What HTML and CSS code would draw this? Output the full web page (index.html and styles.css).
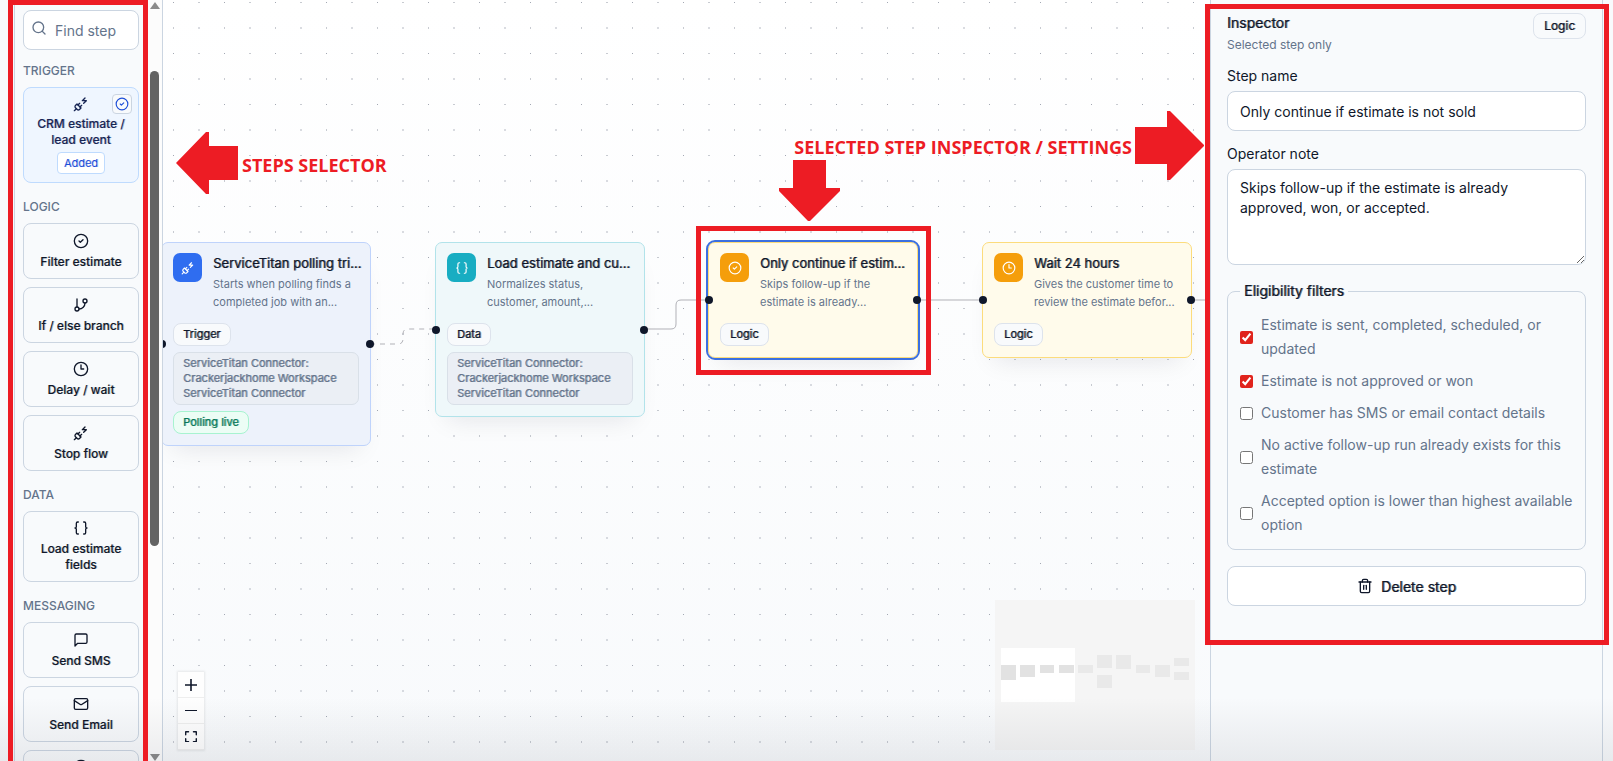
FILE: index.html
```html
<!DOCTYPE html>
<html lang="en">

<head>
  <meta charset="UTF-8">
  <meta name="viewport" content="width=device-width, initial-scale=1.0">
  <title>Workflow Builder</title>
  <link rel="stylesheet" href="styles.css">
</head>

<body>
  <!-- shared icons -->
  <svg class="sprite" aria-hidden="true">
    <symbol id="i-search" viewBox="0 0 24 24"><circle cx="11" cy="11" r="8"/><path d="m21 21-4.3-4.3"/></symbol>
    <symbol id="i-plug" viewBox="0 0 24 24"><path d="M6.3 20.3a2.4 2.4 0 0 0 3.4 0L12 18l-6-6-2.3 2.3a2.4 2.4 0 0 0 0 3.4Z"/><path d="m2 22 3-3"/><path d="M7.5 13.5 10 11"/><path d="M10.5 16.5 13 14"/><path d="m18 3-4 4h6l-4 4"/></symbol>
    <symbol id="i-check" viewBox="0 0 24 24"><circle cx="12" cy="12" r="10"/><path d="m9 12 2 2 4-4"/></symbol>
    <symbol id="i-branch" viewBox="0 0 24 24"><path d="M6 3v12"/><circle cx="18" cy="6" r="3"/><circle cx="6" cy="18" r="3"/><path d="M18 9a9 9 0 0 1-9 9"/></symbol>
    <symbol id="i-clock" viewBox="0 0 24 24"><circle cx="12" cy="12" r="10"/><path d="M12 6v6h4"/></symbol>
    <symbol id="i-braces" viewBox="0 0 24 24"><path d="M8 3H7a2 2 0 0 0-2 2v5a2 2 0 0 1-2 2 2 2 0 0 1 2 2v5a2 2 0 0 0 2 2h1"/><path d="M16 21h1a2 2 0 0 0 2-2v-5a2 2 0 0 1 2-2 2 2 0 0 1-2-2V5a2 2 0 0 0-2-2h-1"/></symbol>
    <symbol id="i-message" viewBox="0 0 24 24"><path d="M21 15a2 2 0 0 1-2 2H7l-4 4V5a2 2 0 0 1 2-2h14a2 2 0 0 1 2 2z"/></symbol>
    <symbol id="i-mail" viewBox="0 0 24 24"><rect x="2" y="4" width="20" height="16" rx="2"/><path d="m22 7-9 5.7a2 2 0 0 1-2 0L2 7"/></symbol>
    <symbol id="i-trash" viewBox="0 0 24 24"><path d="M3 6h18"/><path d="M19 6v14a2 2 0 0 1-2 2H7a2 2 0 0 1-2-2V6"/><path d="M8 6V4a2 2 0 0 1 2-2h4a2 2 0 0 1 2 2v2"/><path d="M10 11v6"/><path d="M14 11v6"/></symbol>
  </svg>

  <div class="app">
    <aside class="sidebar">
      <div class="palette">
        <div class="search">
          <svg class="icon"><use href="#i-search"/></svg>
          <input type="text" placeholder="Find step" aria-label="Find step">
        </div>

        <section class="group">
          <h3>Trigger</h3>
          <button class="step added">
            <svg class="icon"><use href="#i-plug"/></svg>
            <span>CRM estimate / lead event</span>
            <span class="added-badge">Added</span>
            <span class="tick"><svg class="icon"><use href="#i-check"/></svg></span>
          </button>
        </section>

        <section class="group">
          <h3>Logic</h3>
          <button class="step"><svg class="icon"><use href="#i-check"/></svg><span>Filter estimate</span></button>
          <button class="step"><svg class="icon"><use href="#i-branch"/></svg><span>If / else branch</span></button>
          <button class="step"><svg class="icon"><use href="#i-clock"/></svg><span>Delay / wait</span></button>
          <button class="step"><svg class="icon"><use href="#i-plug"/></svg><span>Stop flow</span></button>
        </section>

        <section class="group">
          <h3>Data</h3>
          <button class="step"><svg class="icon"><use href="#i-braces"/></svg><span>Load estimate fields</span></button>
        </section>

        <section class="group">
          <h3>Messaging</h3>
          <button class="step"><svg class="icon"><use href="#i-message"/></svg><span>Send SMS</span></button>
          <button class="step"><svg class="icon"><use href="#i-mail"/></svg><span>Send Email</span></button>
          <button class="step last" aria-label="More"><svg class="icon"><use href="#i-clock"/></svg></button>
        </section>
      </div>
      <div class="scrollbar">
        <span class="arrow-up"></span>
        <span class="thumb"></span>
        <span class="arrow-down"></span>
      </div>
    </aside>

    <main class="canvas">
      <svg class="edges" aria-hidden="true">
        <defs>
          <pattern id="dots" width="51" height="51" patternUnits="userSpaceOnUse">
            <rect x="10" y="2" width="1" height="1"/>
            <rect x="10" y="27" width="1" height="2" opacity=".6"/>
            <rect x="35" y="2" width="2" height="1" opacity=".6"/>
            <rect x="35" y="27" width="2" height="2" opacity=".4"/>
          </pattern>
        </defs>
        <rect class="dots" width="100%" height="100%" fill="url(#dots)"/>
        <path class="dashed" d="M207 344H235Q240 344 240 339V334Q240 329 245 329H272"/>
        <path d="M481 329H508Q513 329 513 324V305Q513 300 518 300H546"/>
        <path d="M754 300H819"/>
        <path d="M1027 300H1060"/>
      </svg>

      <article class="node trigger">
        <div class="node-head">
          <span class="node-icon"><svg class="icon"><use href="#i-plug"/></svg></span>
          <div class="node-text">
            <h4>ServiceTitan polling tri...</h4>
            <p>Starts when polling finds a completed job with an...</p>
          </div>
        </div>
        <span class="tag">Trigger</span>
        <p class="connector">ServiceTitan Connector: Crackerjackhome Workspace ServiceTitan Connector</p>
        <span class="tag live">Polling live</span>
        <i class="handle in"></i><i class="handle out"></i>
      </article>

      <article class="node data">
        <div class="node-head">
          <span class="node-icon"><svg class="icon"><use href="#i-braces"/></svg></span>
          <div class="node-text">
            <h4>Load estimate and cu...</h4>
            <p>Normalizes status, customer, amount,...</p>
          </div>
        </div>
        <span class="tag">Data</span>
        <p class="connector">ServiceTitan Connector: Crackerjackhome Workspace ServiceTitan Connector</p>
        <i class="handle in"></i><i class="handle out"></i>
      </article>

      <article class="node logic filter selected">
        <div class="node-head">
          <span class="node-icon"><svg class="icon"><use href="#i-check"/></svg></span>
          <div class="node-text">
            <h4>Only continue if estim...</h4>
            <p>Skips follow-up if the estimate is already...</p>
          </div>
        </div>
        <span class="tag">Logic</span>
        <i class="handle in"></i><i class="handle out"></i>
      </article>

      <article class="node logic wait">
        <div class="node-head">
          <span class="node-icon"><svg class="icon"><use href="#i-clock"/></svg></span>
          <div class="node-text">
            <h4>Wait 24 hours</h4>
            <p>Gives the customer time to review the estimate befor...</p>
          </div>
        </div>
        <span class="tag">Logic</span>
        <i class="handle in"></i><i class="handle out"></i>
      </article>

      <div class="controls">
        <button aria-label="Zoom in"><svg viewBox="0 0 32 32"><path d="M18.133 13.867V0h-4.266v13.867H0v4.266h13.867V32h4.266V18.133H32v-4.266z"/></svg></button>
        <button aria-label="Zoom out"><svg viewBox="0 0 32 5"><path d="M0 0h32v4.2H0z"/></svg></button>
        <button aria-label="Fit view"><svg viewBox="0 0 32 30"><path d="M3.7 4.6v5.4c0 1-.8 1.9-1.8 1.9S0 11 0 10V2.7C0 1.200 1.200 0 2.700 0h6.700c1 0 1.900.8 1.900 1.900s-.8 1.900-1.900 1.900H4.500c-.4 0-.8.4-.8.8zM29.300 0h-6.700c-1 0-1.900.8-1.900 1.900s.8 1.900 1.900 1.900h4.900c.4 0 .8.4.8.8v5.400c0 1 .8 1.900 1.900 1.900S32 11 32 10V2.700C32 1.200 30.800 0 29.300 0zM28.300 25.800c0 .4-.4.8-.8.8h-4.900c-1 0-1.900.8-1.900 1.900s.8 1.900 1.900 1.900h6.700c1.500 0 2.700-1.200 2.700-2.700v-7.300c0-1-.8-1.900-1.900-1.900s-1.900.8-1.900 1.900zM4.500 26.600c-.4 0-.8-.4-.8-.8v-5.400c0-1-.8-1.900-1.900-1.900S0 19.400 0 20.400v7.300c0 1.500 1.200 2.700 2.700 2.700h6.700c1 0 1.900-.8 1.900-1.900s-.8-1.900-1.900-1.900z"/></svg></button>
      </div>

      <svg class="minimap" viewBox="0 0 200 150" aria-hidden="true">
        <rect class="map-view" x="6" y="48" width="74" height="54"/>
        <g class="map-near">
          <rect x="6" y="65" width="15" height="15"/>
          <rect x="25" y="65" width="15" height="12"/>
          <rect x="45" y="65" width="14" height="8"/>
          <rect x="64" y="65" width="15" height="8"/>
        </g>
        <g class="map-far">
          <rect x="83" y="65" width="15" height="8"/>
          <rect x="102" y="55" width="15" height="13"/>
          <rect x="102" y="75" width="15" height="13"/>
          <rect x="121" y="55" width="15" height="14"/>
          <rect x="141" y="65" width="14" height="8"/>
          <rect x="160" y="65" width="15" height="12"/>
          <rect x="179" y="58" width="15" height="8"/>
          <rect x="179" y="72" width="15" height="8"/>
        </g>
      </svg>

      <div class="frame node-frame"></div>
      <p class="note steps-note">STEPS SELECTOR</p>
      <p class="note inspector-note">SELECTED STEP INSPECTOR / SETTINGS</p>
      <svg class="arrow arrow-left" viewBox="0 0 62 62"><path d="M0 31 30 0h3v14h29v34H33v14h-3z"/></svg>
      <svg class="arrow arrow-down-note" viewBox="0 0 61 61"><path d="M14 0h33v28h14v3L31 61h-2L0 31v-3h14z"/></svg>
      <svg class="arrow arrow-right" viewBox="0 0 69 69"><path d="M0 16h32V0h3l34 34v1L35 69h-3V53H0z"/></svg>
    </main>

    <aside class="inspector">
      <header>
        <div>
          <h2>Inspector</h2>
          <p>Selected step only</p>
        </div>
        <span class="pill">Logic</span>
      </header>

      <div class="field">
        <label for="stepName">Step name</label>
        <input type="text" id="stepName" value="Only continue if estimate is not sold">
      </div>
      <div class="field">
        <label for="note">Operator note</label>
        <textarea id="note">Skips follow-up if the estimate is already approved, won, or accepted.</textarea>
      </div>

      <fieldset>
        <legend>Eligibility filters</legend>
        <label><input type="checkbox" checked><span>Estimate is sent, completed, scheduled, or updated</span></label>
        <label><input type="checkbox" checked><span>Estimate is not approved or won</span></label>
        <label><input type="checkbox"><span>Customer has SMS or email contact details</span></label>
        <label><input type="checkbox"><span>No active follow-up run already exists for this estimate</span></label>
        <label><input type="checkbox"><span>Accepted option is lower than highest available option</span></label>
      </fieldset>

      <button class="delete"><svg class="icon"><use href="#i-trash"/></svg>Delete step</button>
    </aside>
  </div>

  <div class="fade"></div>
  <div class="frame steps-frame"></div>
  <div class="frame inspector-frame"></div>
</body>

</html>
```

FILE: styles.css
```css
* {
  box-sizing: border-box;
}

body {
  margin: 0;
  background: #f8fafc;
  color: #0f172a;
  font-family: Inter, "Liberation Sans", sans-serif;
  font-size: 14px;
  overflow: hidden;
}

h2, h3, h4, p {
  margin: 0;
}

button, input, textarea {
  font: inherit;
  color: inherit;
}

.sprite {
  position: absolute;
  width: 0;
  height: 0;
}

.icon {
  width: 16px;
  height: 16px;
  flex: none;
  fill: none;
  stroke: currentColor;
  stroke-width: 2;
  stroke-linecap: round;
  stroke-linejoin: round;
}

.app {
  display: flex;
  height: 100vh;
  margin: 0 10px 0 14px;
  border-left: 1px solid #cbd5e1;
  border-right: 1px solid #cbd5e1;
}

/* thickened regular weight for headings, tags and buttons */
.node h4,
.tag,
.connector,
.pill,
.inspector h2,
legend,
.delete {
  font-weight: 400;
  text-shadow: 1px 0 color-mix(in srgb, currentColor 60%, transparent);
}

.step {
  font-weight: 500;
  text-shadow: 1px 0 color-mix(in srgb, currentColor 30%, transparent);
}

/* sidebar */
.sidebar {
  display: flex;
  flex: none;
  width: 148px;
  border-right: 1px solid #cbd5e1;
  overflow: hidden;
}

.palette {
  flex: 1;
  display: flex;
  flex-direction: column;
  gap: 16px;
  min-width: 0;
  padding: 10px 8px;
}

.search {
  display: flex;
  flex: none;
  align-items: center;
  gap: 8px;
  height: 40px;
  margin-bottom: -3px;
  padding: 0 7px;
  background: #fff;
  border: 1px solid #cbd5e1;
  border-radius: 8px;
  color: #64748b;
}

.search .icon {
  margin-bottom: 4px;
}

.search input {
  flex: 1;
  min-width: 0;
  padding: 0;
  border: 0;
  outline: 0;
  background: none;
}

.search input::placeholder {
  color: #64748b;
}

.group {
  display: flex;
  flex-direction: column;
  flex: none;
  gap: 8px;
}

.group h3 {
  color: #64748b;
  font-size: 12px;
  font-weight: 500;
  line-height: 16px;
  text-transform: uppercase;
}

.step {
  position: relative;
  display: flex;
  flex-direction: column;
  align-items: center;
  justify-content: center;
  gap: 5px;
  min-height: 56px;
  padding: 8px;
  background: #f8fafc;
  border: 1px solid #cbd5e1;
  border-radius: 8px;
  font-size: 12px;
  line-height: 16px;
}

.step.last {
  justify-content: flex-start;
}

.step.added {
  gap: 4px;
  background: #eff6ff;
  border-color: #bfdbfe;
  color: #172554;
}

.added-badge {
  padding: 2px 6px;
  background: #fff;
  border: 1px solid #bfdbfe;
  border-radius: 4px;
  color: #1d4ed8;
  font-size: 11px;
  font-weight: 400;
}

.tick {
  position: absolute;
  top: 6px;
  right: 6px;
  display: flex;
  align-items: center;
  justify-content: center;
  width: 20px;
  height: 20px;
  background: #f8fafc;
  border: 1px solid #cbd5e1;
  border-radius: 4px;
  color: #1d4ed8;
}

.tick .icon {
  width: 14px;
  height: 14px;
}

.scrollbar {
  display: flex;
  flex: none;
  flex-direction: column;
  align-items: center;
  width: 15px;
  background: #fcfcfc;
}

.scrollbar .thumb {
  width: 9px;
  height: 475px;
  margin-top: 62px;
  background: #636363;
  border-radius: 5px;
}

.arrow-up, .arrow-down {
  border: 5px solid transparent;
  border-top-width: 0;
  border-bottom: 7px solid #8b8b8b;
  margin-top: 2px;
}

.arrow-down {
  border-top: 7px solid #8b8b8b;
  border-bottom: 0;
  margin: auto 0 0;
}

/* canvas */
.canvas {
  position: relative;
  flex: 1;
  min-width: 0;
  overflow: hidden;
  background: linear-gradient(#fff, #f8fafc);
}

.edges {
  position: absolute;
  inset: 0;
  width: 100%;
  height: 100%;
  fill: none;
  stroke: #b1b1b7;
}

.edges pattern {
  fill: #a3a8b3;
  stroke: none;
}

.edges .dots {
  stroke: none;
}

.edges .dashed {
  stroke-dasharray: 5;
}

.node {
  position: absolute;
  top: 242px;
  display: flex;
  flex-direction: column;
  align-items: flex-start;
  gap: 6px;
  width: 210px;
  padding: 10px 11px 11px;
  border: 1px solid;
  border-radius: 7px;
  box-shadow: 0 14px 24px -12px rgba(15, 23, 42, 0.1);
}

.node.trigger {
  left: -2px;
  background: #edf2fb;
  border-color: #bfd3fb;
}

.node.data {
  left: 272px;
  background: #eff8fa;
  border-color: #b2e3ea;
}

.node.logic {
  background: #fffbeb;
  border-color: #fcdc7c;
}

.node.filter {
  left: 545px;
}

.node.wait {
  left: 819px;
}

.node.selected {
  outline: 2px solid #3b6fe0;
}

.node-head {
  display: flex;
  gap: 11px;
  width: 100%;
  margin-bottom: 6px;
}

.node-icon {
  display: flex;
  flex: none;
  align-items: center;
  justify-content: center;
  width: 29px;
  height: 29px;
  border-radius: 7px;
  color: #fff;
}

.node-icon .icon {
  width: 14px;
  height: 14px;
}

.trigger .node-icon {
  background: #2f6df0;
}

.data .node-icon {
  background: #18adc2;
}

.logic .node-icon {
  background: #f59e0b;
}

.node-text {
  min-width: 0;
}

.node h4 {
  font-size: 13px;
  line-height: 20px;
  white-space: nowrap;
}

.node-text p {
  margin-top: 2px;
  color: #64748b;
  font-size: 11px;
  line-height: 18px;
}

.tag {
  padding: 3px 9px;
  background: #f8fafc;
  border: 1px solid #dde3ec;
  border-radius: 8px;
  font-size: 11px;
  line-height: 15px;
}

.tag.live {
  background: #ecfdf5;
  border-color: #a7f3d0;
  color: #047857;
}

.connector {
  width: 100%;
  padding: 3px 9px;
  background: #ebeff5;
  border: 1px solid #d9e0e8;
  border-radius: 7px;
  color: #64748b;
  font-size: 11px;
  line-height: 15px;
}

.handle {
  position: absolute;
  top: 50%;
  width: 8px;
  height: 8px;
  margin-top: -4px;
  background: #0f172a;
  border-radius: 50%;
}

.handle.in {
  left: -4px;
}

.handle.out {
  right: -4px;
}

.controls {
  position: absolute;
  left: 15px;
  bottom: 11px;
  display: flex;
  flex-direction: column;
  box-shadow: 0 0 2px 1px rgba(0, 0, 0, 0.08);
}

.controls button {
  display: flex;
  align-items: center;
  justify-content: center;
  width: 26px;
  height: 26px;
  padding: 0;
  background: #fefefe;
  border: 0;
  border-bottom: 1px solid #eee;
}

.controls svg {
  width: 12px;
  max-height: 12px;
  fill: #0f172a;
}

.minimap {
  position: absolute;
  right: 15px;
  bottom: 11px;
  width: 200px;
  height: 150px;
  background: #f5f5f5;
}

.map-view {
  fill: #fff;
}

.map-near {
  fill: #e2e2e2;
}

.map-far {
  fill: #e9e9e9;
}

/* inspector */
.inspector {
  flex: none;
  display: flex;
  flex-direction: column;
  width: 392px;
  padding: 13px 16px;
  border-left: 1px solid #cbd5e1;
}

.inspector header {
  display: flex;
  align-items: flex-start;
  justify-content: space-between;
  margin-bottom: 13px;
}

.inspector h2 {
  font-size: 14px;
  line-height: 20px;
}

.inspector header p {
  margin-top: 4px;
  color: #64748b;
  font-size: 12px;
  line-height: 16px;
}

.pill {
  padding: 4px 10px;
  border: 1px solid #dde3ec;
  border-radius: 8px;
  font-size: 12px;
  line-height: 16px;
}

.field {
  display: flex;
  flex-direction: column;
  gap: 5px;
  margin-bottom: 13px;
  line-height: 20px;
}

.field input,
.field textarea {
  width: 100%;
  height: 40px;
  padding: 8px 12px;
  background: #fff;
  border: 1px solid #cbd5e1;
  border-radius: 8px;
}

.field textarea {
  height: 96px;
  resize: vertical;
}

fieldset {
  display: flex;
  flex-direction: column;
  gap: 8px;
  min-width: 0;
  margin: 3px 0 16px;
  padding: 12px;
  border: 1px solid #cbd5e1;
  border-radius: 8px;
}

legend {
  padding: 0 4px;
  line-height: 20px;
}

fieldset label {
  display: flex;
  align-items: center;
  gap: 8px;
  color: #64748b;
  line-height: 24px;
}

fieldset input {
  flex: none;
  width: 13px;
  height: 13px;
  margin: 0;
  accent-color: #e0231c;
}

.delete {
  display: flex;
  align-items: center;
  justify-content: center;
  gap: 8px;
  height: 40px;
  background: #fff;
  border: 1px solid #cbd5e1;
  border-radius: 8px;
}

/* bottom shade */
.fade {
  position: absolute;
  right: 0;
  bottom: 0;
  left: 0;
  height: 64px;
  background: linear-gradient(transparent, rgba(15, 23, 42, 0.07));
  pointer-events: none;
}

/* annotations */
.frame {
  position: absolute;
  border: 5px solid #ed1c24;
  pointer-events: none;
}

.steps-frame {
  top: 0;
  bottom: -5px;
  left: 8px;
  width: 140px;
}

.node-frame {
  top: 226px;
  left: 533px;
  width: 235px;
  height: 149px;
}

.inspector-frame {
  top: 4px;
  right: 4px;
  width: 404px;
  height: 641px;
}

.note {
  position: absolute;
  color: #ed1c24;
  font-family: "Open Sans", "Noto Sans", sans-serif;
  font-size: 18px;
  font-weight: 700;
  line-height: 24px;
  white-space: nowrap;
}

.steps-note {
  top: 153px;
  left: 79px;
}

.inspector-note {
  top: 135px;
  right: 78px;
}

.arrow {
  position: absolute;
  fill: #ed1c24;
}

.arrow-left {
  top: 132px;
  left: 13px;
  width: 62px;
  height: 62px;
}

.arrow-down-note {
  top: 160px;
  left: 616px;
  width: 61px;
  height: 61px;
}

.arrow-right {
  top: 111px;
  right: 6px;
  width: 69px;
  height: 69px;
}
```
